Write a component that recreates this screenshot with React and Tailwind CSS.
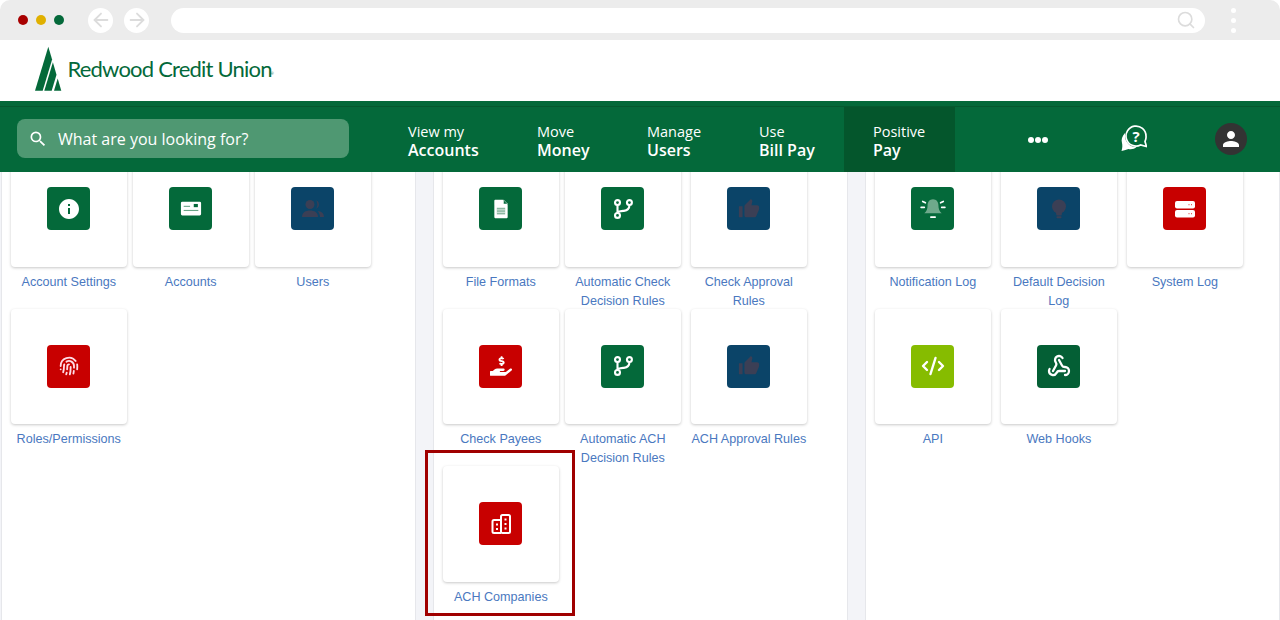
import { Fingerprint, Webhook, CodeXml, ArrowLeft, ArrowRight, Search } from 'lucide-react';
import { MdInfo, MdThumbUp, MdSearch, MdPerson } from 'react-icons/md';
import { FaHandHoldingUsd } from 'react-icons/fa';

const GREEN = 'bg-[#04693a]';
const NAVY = 'bg-[#0b4468]';
const RED = 'bg-[#c80000]';
const LIME = 'bg-[#86bc00]';

function CardIcon() {
  return (
    <svg viewBox="0 0 24 24" className="w-[22px] h-[22px]">
      <rect x="1" y="4" width="22" height="15" rx="1.5" fill="#fff" />
      <rect x="15" y="6.5" width="4.5" height="3.5" fill="#04693a" />
      <rect x="4" y="8.5" width="7" height="1.2" fill="#6aa588" />
      <rect x="4" y="13" width="16" height="1.2" fill="#6aa588" />
    </svg>
  );
}

function UsersIcon() {
  return (
    <svg viewBox="0 0 24 20" className="w-[24px] h-[20px]" fill="#3b3f55">
      <circle cx="9" cy="5.500" r="4.500" />
      <path d="M1 18c0-4.500 3.500-6.500 8-6.500s8 2 8 6.500z" />
      <path d="M15 1.300a4.500 4.500 0 0 1 0 8.400c1-1.200 1.400-2.600 1.400-4.200S16 2.500 15 1.300z" />
      <path d="M19 18c0-2.500-.8-4.500-2.500-6 4 .4 6.500 2.400 6.500 6z" />
    </svg>
  );
}

function FileIcon() {
  return (
    <svg viewBox="0 0 24 24" className="w-[20px] h-[20px]">
      <path d="M5 1h9l6 6v15a1 1 0 0 1-1 1H5a1 1 0 0 1-1-1V2a1 1 0 0 1 1-1z" fill="#fff" />
      <path d="M15 1l5 5h-5z" fill="#04693a" stroke="#fff" strokeWidth="0.6" />
      <rect x="7" y="10.5" width="10" height="8" fill="#8cb8a2" />
      <path d="M7 13h10M7 16h10" stroke="#fff" strokeWidth="0.8" />
    </svg>
  );
}

function BranchIcon() {
  return (
    <svg viewBox="0 0 24 24" className="w-[22px] h-[22px]" fill="none" stroke="#fff" strokeWidth="2.300">
      <circle cx="6" cy="5" r="2.700" />
      <circle cx="19" cy="5" r="2.700" />
      <circle cx="6" cy="19" r="2.700" />
      <path d="M6 7.700v8.600M19 7.700c0 4-3 6-6 6.300-3 .3-7 .5-7 2.300" />
    </svg>
  );
}

function BellIcon() {
  return (
    <svg viewBox="0 0 24 24" className="w-[26px] h-[26px]">
      <path d="M12 3c3.200 0 5 2.600 5 5.500 0 3.500 1 5.500 3 7.500H4c2-2 3-4 3-7.500C7 5.600 8.800 3 12 3z" fill="#6ea98b" />
      <path d="M2.500 5l2.500 1.300M21.500 5L19 6.300M1 10.500h3M20 10.500h3M10 19.500h4" stroke="#fff" strokeWidth="1.500" strokeLinecap="round" />
    </svg>
  );
}

function BulbIcon() {
  return (
    <svg viewBox="0 0 24 24" className="w-[24px] h-[24px]" fill="#3b3f55">
      <circle cx="12" cy="9.500" r="7" />
      <path d="M8.500 14h7l-1 4.500h-5z" />
      <rect x="9.500" y="19.300" width="5" height="2" rx="0.800" />
    </svg>
  );
}

function ServerIcon() {
  return (
    <svg viewBox="0 0 24 24" className="w-[24px] h-[24px]">
      <rect x="2" y="4" width="20" height="7.500" rx="2" fill="#fff" />
      <rect x="2" y="13" width="20" height="7.500" rx="2" fill="#fff" />
      <path d="M15.500 7.700h1M18 7.700h1M15.500 16.700h1M18 16.700h1" stroke="#e45a5a" strokeWidth="1.200" />
    </svg>
  );
}

function BuildingIcon() {
  return (
    <svg viewBox="0 0 24 24" className="w-[24px] h-[24px]" fill="none" stroke="#fff" strokeWidth="2">
      <rect x="12" y="3" width="9" height="18" rx="1.500" />
      <path d="M12 8H5a1.500 1.500 0 0 0-1.500 1.500V19.500A1.500 1.500 0 0 0 5 21h7" />
      <path d="M15.500 7.500h2M15.500 12h2M15.500 16.500h2M7 12.500h2M7 17h2" />
    </svg>
  );
}

const PANELS = [
  {
    cols: 'grid-cols-[122px_122px_116px]',
    tiles: [
      { label: 'Account Settings', color: GREEN, icon: <MdInfo className="text-white w-[24px] h-[24px]" /> },
      { label: 'Accounts', color: GREEN, icon: <CardIcon /> },
      { label: 'Users', color: NAVY, icon: <UsersIcon /> },
      { label: 'Roles/Permissions', color: RED, icon: <Fingerprint className="text-[#ffdce6] w-[20px] h-[20px]" strokeWidth={2.200} /> },
    ],
  },
  {
    cols: 'grid-cols-[122px_126px_116px]',
    tiles: [
      { label: 'File Formats', color: GREEN, icon: <FileIcon /> },
      { label: 'Automatic Check\nDecision Rules', color: GREEN, icon: <BranchIcon /> },
      { label: 'Check Approval\nRules', color: NAVY, icon: <MdThumbUp className="text-[#3b3f55] w-[22px] h-[22px]" /> },
      { label: 'Check Payees', color: RED, icon: <FaHandHoldingUsd className="text-white w-[22px] h-[22px]" /> },
      { label: 'Automatic ACH\nDecision Rules', color: GREEN, icon: <BranchIcon /> },
      { label: 'ACH Approval Rules', color: NAVY, icon: <MdThumbUp className="text-[#3b3f55] w-[22px] h-[22px]" /> },
      { label: 'ACH Companies', color: RED, icon: <BuildingIcon /> },
    ],
  },
  {
    cols: 'grid-cols-[126px_126px_116px]',
    tiles: [
      { label: 'Notification Log', color: GREEN, icon: <BellIcon /> },
      { label: 'Default Decision\nLog', color: NAVY, icon: <BulbIcon /> },
      { label: 'System Log', color: RED, icon: <ServerIcon /> },
      { label: 'API', color: LIME, icon: <CodeXml className="text-white w-[24px] h-[24px]" strokeWidth={2.400} /> },
      { label: 'Web Hooks', color: 'bg-[#045f35]', icon: <Webhook className="text-white w-[24px] h-[24px]" strokeWidth={2.300} /> },
    ],
  },
];

const NAV_ITEMS = [
  { top: 'View my', bottom: 'Accounts', width: 'w-[129px]' },
  { top: 'Move', bottom: 'Money', width: 'w-[110px]' },
  { top: 'Manage', bottom: 'Users', width: 'w-[112px]' },
  { top: 'Use', bottom: 'Bill Pay', width: 'w-[85px]' },
];

function Tile({ tile }) {
  return (
    <div className="w-[115.5px] flex flex-col items-center">
      <div className="w-[115.5px] h-[115.5px] shrink-0 bg-white rounded shadow-[0_1px_3px_rgba(0,0,0,0.22)] flex justify-center pt-[36px]">
        <div className={`w-[43px] h-[43px] rounded flex items-center justify-center ${tile.color}`}>{tile.icon}</div>
      </div>
      <div className="w-[130px] mt-[6.1px] text-center whitespace-pre-line text-[12.6px] leading-[19px] text-[#4a78c0] font-['Liberation_Sans',sans-serif]">
        {tile.label}
      </div>
    </div>
  );
}

export default function App() {
  return (
    <div className="relative w-[1280px] h-[620px] flex flex-col overflow-hidden bg-white">
      <div className="h-[40px] shrink-0 bg-[#ececec] rounded-t-[10px] flex items-center pl-[17.5px]">
        <span className="w-[10px] h-[10px] rounded-full bg-[#a80000]" />
        <span className="w-[10px] h-[10px] rounded-full bg-[#e0b000] ml-[8px]" />
        <span className="w-[10px] h-[10px] rounded-full bg-[#04693a] ml-[8px]" />
        <span className="w-[25px] h-[25px] rounded-full bg-white ml-[24.5px] flex items-center justify-center">
          <ArrowLeft className="w-[22px] h-[22px] text-[#dcdcdc]" />
        </span>
        <span className="w-[25px] h-[25px] rounded-full bg-white ml-[11px] flex items-center justify-center">
          <ArrowRight className="w-[22px] h-[22px] text-[#dcdcdc]" />
        </span>
        <div className="w-[1034px] h-[25px] rounded-full bg-white ml-[22px] flex items-center justify-end pr-[9px]">
          <Search className="w-[20px] h-[20px] text-[#dcdcdc]" />
        </div>
        <div className="ml-[26px] flex flex-col gap-[5px]">
          <span className="w-[5px] h-[5px] rounded-full bg-white" />
          <span className="w-[5px] h-[5px] rounded-full bg-white" />
          <span className="w-[5px] h-[5px] rounded-full bg-white" />
        </div>
      </div>

      <div className="h-[61px] shrink-0 bg-white flex items-start pl-[35px] pt-[6px]">
        <svg viewBox="35 46 27 45" className="w-[27px] h-[45px]">
          <polygon points="48.3,46.7 35,90.7 42.7,90.7 52.1,59.6" fill="#04693a" />
          <polygon points="52.9,62.3 44.3,90.7 51.7,90.7 56.5,74.7" fill="#04693a" />
          <polygon points="57.7,78.6 54,90.7 61.3,90.7" fill="#04693a" />
        </svg>
        <span className="ml-[5.5px] mt-[9px] text-[22px] leading-[28px] tracking-[-0.8px] text-[#04693a] font-['Lato',sans-serif]">
          Redwood Credit Union<sup className="text-[4px] tracking-normal -ml-[1px]">®</sup>
        </span>
      </div>

      <div className="h-[71px] shrink-0 bg-[#04693a] flex flex-col font-['Open_Sans',sans-serif] text-white relative z-10">
        <div className="h-[6px] shrink-0 border-b border-[#05592f]" />
        <div className="flex-1 flex">
          <div className="w-[332px] h-[39px] ml-[17px] mt-[12px] rounded-lg bg-[#4f9872] flex items-center pl-[11px]">
            <MdSearch className="w-[20px] h-[20px]" />
            <span className="ml-[10px] text-[16px]">What are you looking for?</span>
          </div>
          <div className="flex ml-[59px]">
            {NAV_ITEMS.map((item) => (
              <div key={item.bottom} className={`${item.width} pt-[15px]`}>
                <div className="text-[14.5px] leading-[19px]">{item.top}</div>
                <div className="text-[16px] leading-[19px] font-semibold">{item.bottom}</div>
              </div>
            ))}
          </div>
          <div className="w-[111px] bg-[#04562c] pl-[29px] pt-[15px]">
            <div className="text-[14.5px] leading-[19px]">Positive</div>
            <div className="text-[16px] leading-[19px] font-semibold">Pay</div>
          </div>
          <div className="flex items-center gap-[1px] ml-[73px]">
            <span className="w-[6px] h-[6px] rounded-full bg-white" />
            <span className="w-[6px] h-[6px] rounded-full bg-white" />
            <span className="w-[6px] h-[6px] rounded-full bg-white" />
          </div>
          <svg viewBox="0 0 26 26" className="w-[26px] h-[26px] ml-[73px] mt-[18px]">
            <path d="M4 8C1 11 0 15 1 18c.5 2 .5 5-.5 8 3-.5 5-1.500 7-2 3 .5 6 0 8-2-6-1-11-6-11.500-14z" fill="#fff" />
            <circle cx="15" cy="11" r="11" fill="#04693a" />
            <path d="M25 11a10 10 0 1 0-5.500 9l6 1.500-1.500-5A10 10 0 0 0 25 11z" fill="#04693a" stroke="#fff" strokeWidth="1.700" />
            <text x="15" y="16.500" textAnchor="middle" fill="#fff" fontSize="15" fontWeight="700" fontFamily="Open Sans">?</text>
          </svg>
          <div className="w-[32px] h-[32px] rounded-full bg-[#333333] ml-[68px] mt-[16px] flex items-center justify-center">
            <MdPerson className="w-[24px] h-[24px]" />
          </div>
        </div>
      </div>

      <div className="flex-1 min-h-0 flex gap-[17.2px] pl-[1px] bg-[#f3f4f8]">
        {PANELS.map((panel) => (
          <div key={panel.tiles[0].label} className="flex-1 overflow-hidden bg-white border-x border-[#e6e7eb] pl-[9px]">
            <div className={`grid auto-rows-[157.5px] -mt-[21px] ${panel.cols}`}>
              {panel.tiles.map((tile) => (
                <Tile key={tile.label} tile={tile} />
              ))}
            </div>
          </div>
        ))}
      </div>

      <div className="absolute left-[425px] top-[450px] w-[150px] h-[166px] border-[3px] border-[#a00000]" />
    </div>
  );
}
